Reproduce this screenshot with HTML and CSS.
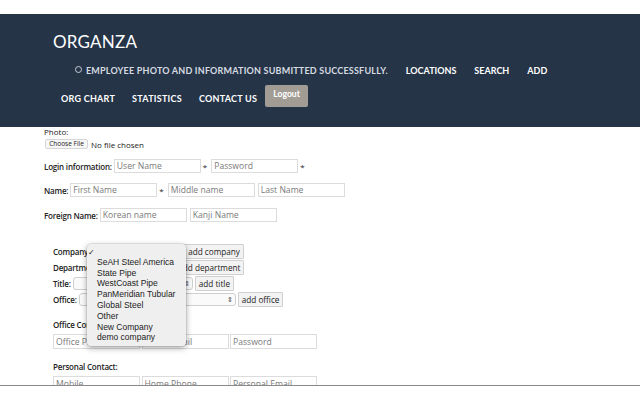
FILE: index.html
```html
<!DOCTYPE html>
<html>
<head>
<meta charset="utf-8">
<title>Organza</title>
<link rel="stylesheet" href="styles.css">
</head>
<body>
<div class="topgap"></div>
<header class="site-header">
  <div class="brand">ORGANZA</div>
  <nav class="nav">
    <ul class="nav-row nav-row-1">
      <li class="msg">Employee photo and information submitted successfully.</li>
      <li>Locations</li>
      <li>Search</li>
      <li>Add</li>
    </ul>
    <ul class="nav-row nav-row-2">
      <li class="txt">Org Chart</li>
      <li class="txt">Statistics</li>
      <li class="txt">Contact Us</li>
      <li class="logout-item"><button class="logout">Logout</button></li>
    </ul>
  </nav>
</header>
<main class="form">
  <div class="label">Photo:</div>
  <div class="file-row"><button class="file-btn">Choose File</button><span class="file-text">No file chosen</span></div>

  <div class="row row-login">
    <span class="label-b">Login information:</span>
    <input class="field" placeholder="User Name"><span class="star">*</span>
    <input class="field" placeholder="Password"><span class="star">*</span>
  </div>
  <div class="row row-name">
    <span class="label-b">Name:</span>
    <input class="field" placeholder="First Name"><span class="star">*</span>
    <input class="field" placeholder="Middle name">
    <input class="field" placeholder="Last Name">
  </div>
  <div class="row row-foreign">
    <span class="label-b">Foreign Name:</span>
    <input class="field" placeholder="Korean name">
    <input class="field" placeholder="Kanji Name">
  </div>

  <section class="org">
    <div class="org-row">
      <span class="label-b">Company:</span>
      <span class="select sel-company"><span class="arrows">&#8661;</span></span>
      <button class="small-btn">add company</button>
    </div>
    <div class="org-row">
      <span class="label-b">Department:</span>
      <span class="select sel-dept"><span class="arrows">&#8661;</span></span>
      <button class="small-btn">add department</button>
    </div>
    <div class="org-row">
      <span class="label-b">Title:</span>
      <span class="select sel-title"><span class="arrows">&#8661;</span></span>
      <button class="small-btn">add title</button>
    </div>
    <div class="org-row">
      <span class="label-b">Office:</span>
      <span class="select sel-office"><span class="arrows">&#8661;</span></span>
      <button class="small-btn">add office</button>
    </div>

    <div class="sub-label sub-office">Office Contact:</div>
    <div class="trio">
      <input class="field wide" placeholder="Office Phone">
      <input class="field wide" placeholder="Office Email">
      <input class="field wide" placeholder="Password">
    </div>
    <div class="sub-label sub-personal">Personal Contact:</div>
    <div class="trio">
      <input class="field wide" placeholder="Mobile">
      <input class="field wide" placeholder="Home Phone">
      <input class="field wide" placeholder="Personal Email">
    </div>

    <div class="popup">
      <div class="opt checked"><span class="check">&#10003;</span></div>
      <div class="opt">SeAH Steel America</div>
      <div class="opt">State Pipe</div>
      <div class="opt">WestCoast Pipe</div>
      <div class="opt">PanMeridian Tubular</div>
      <div class="opt">Global Steel</div>
      <div class="opt">Other</div>
      <div class="opt">New Company</div>
      <div class="opt">demo company</div>
    </div>
  </section>
</main>
</body>
</html>
```

FILE: styles.css
```css
* { box-sizing: border-box; }
html, body { margin: 0; padding: 0; background: #fff; }
body { width: 640px; height: 400px; overflow: hidden; font-family: "Open Sans", "Liberation Sans", sans-serif; }

.topgap { height: 14px; background: #fff; }

.site-header {
  height: 113px;
  background: #253447;
  color: #fff;
  padding: 19px 0 0 53px;
}
.brand {
  font-family: Lato, "Liberation Sans", sans-serif;
  font-size: 17px;
  letter-spacing: 0.2px;
  line-height: 18px;
}
.nav-row {
  list-style: none;
  margin: 0;
  padding: 0;
  display: flex;
  align-items: center;
  font-family: Lato, "Liberation Sans", sans-serif;
  font-weight: 700;
  font-size: 9px;
  letter-spacing: 0;
  text-transform: uppercase;
}
.nav-row li { white-space: nowrap; }
.nav-row-1 { margin-top: 12px; height: 14px; padding-left: 22px; gap: 18px; }
.nav-row-1 .msg { color: #d6dbe1; font-weight: 700; letter-spacing: 0.2px; }
.nav-row-1 .msg::before {
  content: "";
  display: inline-block;
  width: 5px; height: 5px;
  border: 1px solid #c9ced6;
  border-radius: 50%;
  margin-right: 4px;
  vertical-align: 1px;
}
.nav-row-2 { margin-top: 7px; height: 24px; padding-left: 8px; gap: 17px; letter-spacing: 0.25px; }
.nav-row-2 .txt { padding-top: 4px; }
.nav-row-2 .logout-item { margin-left: -9px; }
.logout {
  background: #a19c94;
  color: #fff;
  border: none;
  border-radius: 2px;
  width: 43px;
  height: 22px;
  font-family: Lato, "Liberation Sans", sans-serif;
  font-weight: 700;
  font-size: 8.6px;
  padding: 0 0 4px;
  text-transform: none;
  letter-spacing: 0;
}

.form {
  position: relative;
  height: 259px;
  overflow: hidden;
  border-bottom: 1px solid #8a8a8a;
  padding: 0 0 0 44px;
  font-size: 8px;
  color: #222;
}
.label { line-height: 9px; margin-top: 0; }
.label-b { font-weight: 600; margin-right: 2px; letter-spacing: -0.2px; }
.file-row { margin-top: 3px; height: 10px; display: flex; align-items: center; }
.file-btn {
  height: 10px;
  width: 43px;
  padding: 0;
  margin-left: 1px;
  font-family: inherit;
  font-size: 6.5px;
  background: #f6f6f6;
  border: 1px solid #d6d6d6;
  border-radius: 2px;
  color: #222;
  line-height: 8px;
}
.file-text { margin-left: 3px; }

.row { display: flex; align-items: center; height: 14px; }
.row-login { margin-top: 10px; }
.row-name { margin-top: 10px; }
.row-foreign { margin-top: 11px; }
.field {
  width: 87px;
  height: 14px;
  border: 1px solid #dcdcdc;
  padding: 0 2px;
  font-family: inherit;
  font-size: 8.6px;
  color: #333;
  background: #fff;
  outline: none;
  margin-right: 3px;
}
.field::placeholder { color: #7a7a7a; }
.star { margin: 0 4px 0 -1px; }

.org { position: relative; margin: 22px 0 0 9px; }
.org-row { display: flex; align-items: center; height: 15px; margin-bottom: 1px; }
.select {
  position: relative;
  display: inline-block;
  height: 13px;
  border: 1px solid #cfcfcf;
  border-radius: 3px;
  background: #fafafa;
  margin-right: 2px;
}
.arrows { position: absolute; right: 2px; top: 0; font-size: 7px; line-height: 11px; color: #444; }
.sel-company { width: 90px; }
.sel-dept { width: 70px; }
.sel-title { width: 120px; }
.sel-office { width: 157px; }
.small-btn {
  height: 15px;
  padding: 0 3px;
  border: 1px solid #d0d0d0;
  background: #f3f3f3;
  font-family: inherit;
  font-size: 8.2px;
  color: #222;
  border-radius: 1px;
}

.sub-label { font-weight: 600; line-height: 10px; letter-spacing: -0.2px; }
.sub-office { margin-top: 13px; }
.trio { display: flex; margin-top: 4px; gap: 1.5px; }
.trio .field { width: 87px; height: 15px; margin-right: 0; }
.sub-personal { margin-top: 13px; }

.popup {
  position: absolute;
  left: 34px;
  top: 0;
  width: 99px;
  height: 102px;
  background: #efefef;
  border-radius: 4px;
  box-shadow: 0 2px 6px rgba(0,0,0,0.35), 0 0 0 0.5px rgba(0,0,0,0.15);
  padding-top: 2px;
  font-family: "Liberation Sans", Arial, sans-serif;
  font-size: 8.5px;
  color: #222;
}
.opt { height: 10.8px; line-height: 10.8px; padding-left: 10px; white-space: nowrap; }
.opt.checked { position: relative; }
.check { position: absolute; left: 1px; top: 2px; font-size: 8px; }
```
